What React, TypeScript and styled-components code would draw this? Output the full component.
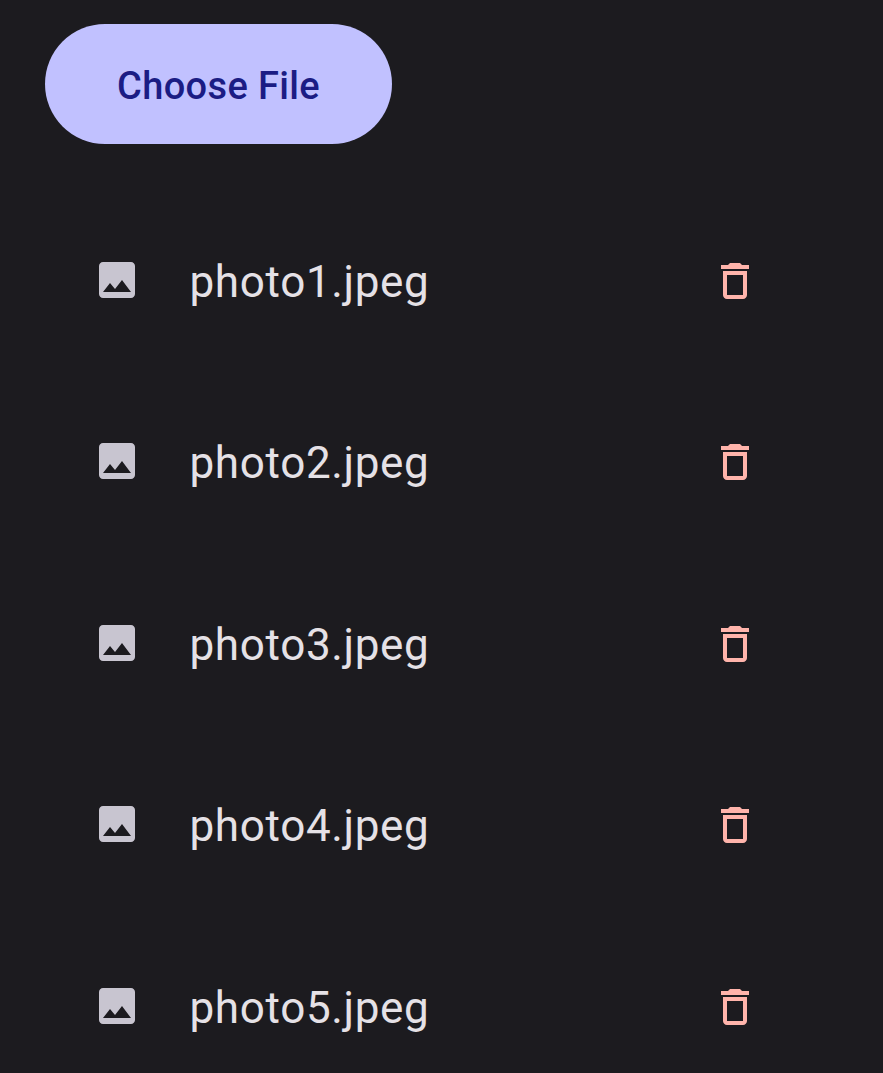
import React from "react";
import styled, { createGlobalStyle } from "styled-components";

const GlobalStyle = createGlobalStyle`
  body { margin: 0; background: #1c1b1f; overflow: hidden; }
  * { box-sizing: border-box; }
`;

const Page = styled.main`
  height: 1073px;
  padding: 24px 45px 0;
  overflow: hidden;
  background: #1c1b1f;
  font-family: Roboto, sans-serif;
`;

const ChooseButton = styled.button`
  display: flex;
  align-items: center;
  justify-content: center;
  width: 347px;
  height: 120px;
  padding: 4px 0 0;
  border: 0;
  border-radius: 60px;
  background: #c1c1ff;
  color: #1b1c84;
  font: 500 38px/1 Roboto, sans-serif;
  letter-spacing: 0.36px;
`;

const FileList = styled.ul`
  margin: 46px 0 0;
  padding: 0;
  list-style: none;
`;

const FileRow = styled.li`
  display: flex;
  align-items: center;
  height: 181.5px;
  padding: 0 79px 0 48px;
`;

const FileName = styled.span`
  flex: 1;
  margin-left: 48.5px;
  padding-top: 2px;
  color: #e5e1e6;
  font-size: 44px;
  line-height: 52px;
  letter-spacing: 0.66px;
`;

const Icon = styled.svg<{ $color: string }>`
  width: 48px;
  height: 48px;
  flex: none;
  fill: ${(p) => p.$color};
`;

const FileIcon = styled.span`
  display: flex;
  padding-bottom: 2px;
`;

const DeleteButton = styled.button`
  display: flex;
  padding: 0;
  border: 0;
  background: none;
`;

const ImageIcon = () => (
  <Icon $color="#c8c5d0" viewBox="0 0 24 24" aria-hidden="true">
    <path d="M21 19V5c0-1.1-.9-2-2-2H5c-1.1 0-2 .9-2 2v14c0 1.1.9 2 2 2h14c1.1 0 2-.9 2-2zM8.5 13.5l2.5 3.01L14.5 12l4.5 6H5l3.5-4.5z" />
  </Icon>
);

const TrashIcon = () => (
  <Icon $color="#ffb4ab" viewBox="0 0 24 24" aria-hidden="true">
    <path d="M6 19c0 1.1.9 2 2 2h8c1.1 0 2-.9 2-2V7H6v12zM8 9h8v10H8V9zm7.5-5-1-1h-5l-1 1H5v2h14V4z" />
  </Icon>
);

const files = ["photo1.jpeg", "photo2.jpeg", "photo3.jpeg", "photo4.jpeg", "photo5.jpeg"];

export default function App() {
  return (
    <>
      <GlobalStyle />
      <Page>
        <ChooseButton type="button">Choose File</ChooseButton>
        <FileList>
          {files.map((name) => (
            <FileRow key={name}>
              <FileIcon>
                <ImageIcon />
              </FileIcon>
              <FileName>{name}</FileName>
              <DeleteButton type="button" aria-label={`Delete ${name}`}>
                <TrashIcon />
              </DeleteButton>
            </FileRow>
          ))}
        </FileList>
      </Page>
    </>
  );
}
